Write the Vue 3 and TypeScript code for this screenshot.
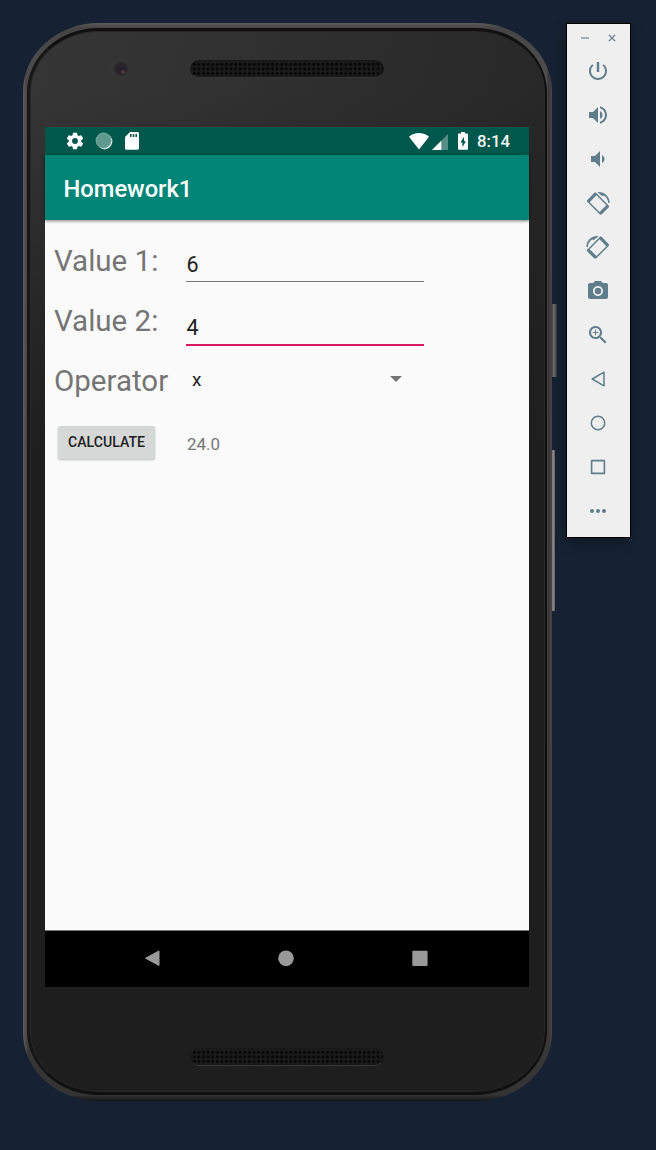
<script setup lang="ts">
import { computed, ref } from 'vue'

interface ToolIcon {
  name: string
  fill?: string
  stroke?: string
  strokeWidth?: number
  shape?: 'rotate-left' | 'rotate-right'
}

const value1 = ref<string>('6')
const value2 = ref<string>('4')
const operator = ref<string>('x')

const result = computed<string>(() => (Number(value1.value) * Number(value2.value)).toFixed(1))

const tools: ToolIcon[] = [
  {
    name: 'Power',
    fill: 'M13.2 3h-2.400v10h2.400V3zm4.63 2.17l-1.42 1.42C17.99 7.86 19 9.81 19 12c0 3.87-3.13 7-7 7s-7-3.13-7-7c0-2.19 1.01-4.14 2.58-5.42L6.17 5.17C4.23 6.82 3 9.26 3 12c0 4.97 4.03 9 9 9s9-4.03 9-9c0-2.74-1.23-5.18-3.17-6.83z',
  },
  {
    name: 'Volume up',
    fill: 'M3 9v6h4l5 5V4L7 9H3zm13.5 3c0-1.77-1.02-3.29-2.5-4.03v8.05c1.48-.73 2.5-2.25 2.5-4.02zM14 3.23v2.06c2.89.86 5 3.54 5 6.71s-2.11 5.85-5 6.71v2.06c4.01-.91 7-4.49 7-8.77s-2.99-7.86-7-8.77z',
  },
  {
    name: 'Volume down',
    fill: 'M18.5 12c0-1.77-1.02-3.29-2.5-4.03v8.05c1.48-.73 2.5-2.25 2.5-4.02zM5 9v6h4l5 5V4L9 9H5z',
  },
  { name: 'Rotate left', shape: 'rotate-left' },
  { name: 'Rotate right', shape: 'rotate-right' },
  {
    name: 'Take screenshot',
    fill: 'M12 8.8a3.2 3.2 0 1 0 0 6.4 3.2 3.2 0 0 0 0-6.4z M9 2L7.17 4H4c-1.1 0-2 .9-2 2v12c0 1.1.9 2 2 2h16c1.1 0 2-.9 2-2V6c0-1.1-.9-2-2-2h-3.17L15 2H9zm3 15c-2.76 0-5-2.24-5-5s2.24-5 5-5 5 2.24 5 5-2.24 5-5 5z',
  },
  {
    name: 'Zoom',
    fill: 'M15.5 14h-.79l-.28-.27C15.41 12.59 16 11.11 16 9.5 16 5.91 13.09 3 9.5 3S3 5.91 3 9.5 5.91 16 9.5 16c1.61 0 3.09-.59 4.23-1.57l.27.28v.79l5 4.99L20.49 19l-4.99-5zm-6 0C7.01 14 5 11.99 5 9.5S7.01 5 9.5 5 14 7.01 14 9.5 11.99 14 9.5 14zM12.2 10H10v2.2H9V10H6.8V9H9V6.8h1V9h2.2z',
  },
  { name: 'Back', stroke: 'M6.2 12L18 5.2v13.6z', strokeWidth: 1.5 },
  { name: 'Home', stroke: 'M12 5.3a6.7 6.7 0 1 0 0 13.4 6.7 6.7 0 0 0 0-13.4z', strokeWidth: 1.5 },
  { name: 'Overview', stroke: 'M5.6 5.6h12.8v12.8H5.6z', strokeWidth: 1.6 },
  {
    name: 'More',
    fill: 'M6 10a2 2 0 1 0 0 4 2 2 0 0 0 0-4zm6 0a2 2 0 1 0 0 4 2 2 0 0 0 0-4zm6 0a2 2 0 1 0 0 4 2 2 0 0 0 0-4z',
  },
]
</script>

<template>
  <main class="desktop">
    <section class="phone">
      <i class="key key-power"></i>
      <i class="key key-volume"></i>
      <div class="face">
        <header class="bezel bezel-top">
          <i class="camera"></i>
          <i class="grille"></i>
        </header>

        <div class="screen">
          <div class="status">
            <svg class="st-gear" viewBox="0 0 24 24">
              <path d="M19.43 12.98c.04-.32.07-.64.07-.98s-.03-.66-.07-.98l2.11-1.65c.19-.15.24-.42.12-.64l-2-3.46c-.12-.22-.39-.3-.61-.22l-2.49 1c-.52-.4-1.08-.73-1.69-.98l-.38-2.65C14.46 2.18 14.25 2 14 2h-4c-.25 0-.46.18-.49.42l-.38 2.65c-.61.25-1.17.59-1.69.98l-2.49-1c-.23-.09-.49 0-.61.22l-2 3.46c-.13.22-.07.49.12.64l2.11 1.65c-.04.32-.07.65-.07.98s.03.66.07.98l-2.11 1.65c-.19.15-.24.42-.12.64l2 3.46c.12.22.39.3.61.22l2.49-1c.52.4 1.08.73 1.69.98l.38 2.65c.03.24.24.42.49.42h4c.25 0 .46-.18.49-.42l.38-2.65c.61-.25 1.17-.59 1.69-.98l2.49 1c.23.09.49 0 .61-.22l2-3.46c.12-.22.07-.49-.12-.64l-2.11-1.65zM12 15.5a3.5 3.5 0 1 1 0-7 3.5 3.5 0 0 1 0 7z" />
            </svg>
            <svg class="st-sync" viewBox="0 0 18 18">
              <circle cx="9.6" cy="9.6" r="7.8" fill="#e3efec" />
              <circle cx="8.5" cy="8.5" r="7.9" fill="#5f9a8e" />
              <circle cx="8.5" cy="8.5" r="7.2" fill="none" stroke="#8ab5ac" stroke-width="1" stroke-dasharray="1 1.26" />
            </svg>
            <svg class="st-card" viewBox="0 0 14 18">
              <path fill-rule="evenodd" d="M5 0h7.5C13.3 0 14 .7 14 1.5v14.7c0 .8-.7 1.5-1.5 1.5h-11C.7 17.7 0 17 0 16.200V5zM5 2v3h1.600V2zm2.700 0v3h1.600V2zm2.700 0v3H12V2z" />
            </svg>
            <span class="spacer"></span>
            <svg class="st-wifi" viewBox="0 0 20 17">
              <path d="M0 3.7C2.8 1.3 6.2 0 10 0s7.2 1.3 10 3.7L10 16.5z" />
            </svg>
            <svg class="st-signal" viewBox="0 0 16 16">
              <path d="M0 16L16 0v16z" opacity=".33" />
              <path d="M0 16L9.300 6.700v9.300z" />
            </svg>
            <svg class="st-battery" viewBox="0 0 10 18">
              <path fill-rule="evenodd" d="M3 0h4v1.6h2c.6 0 1 .4 1 1v14.2c0 .6-.4 1-1 1H1c-.6 0-1-.4-1-1V2.6c0-.6.4-1 1-1h2zM6 4.8L2.4 10.5h2v4.7l3.5-6H6z" />
            </svg>
            <time class="clock">8:14</time>
          </div>

          <div class="appbar"><h1>Homework1</h1></div>

          <form class="content" @submit.prevent>
            <div class="row">
              <label>Value 1:</label>
              <div class="field">{{ value1 }}</div>
            </div>
            <div class="row">
              <label>Value 2:</label>
              <div class="field focused">{{ value2 }}</div>
            </div>
            <div class="row">
              <label>Operator</label>
              <div class="spinner">
                <span>{{ operator }}</span>
                <svg viewBox="0 0 12 6"><path d="M0 0h12L6 6z" /></svg>
              </div>
            </div>
            <div class="row actions">
              <div class="cell"><button type="submit">CALCULATE</button></div>
              <output>{{ result }}</output>
            </div>
          </form>

          <nav class="navbar">
            <svg viewBox="0 0 16 16"><path class="back" d="M15 .9v14.600L1.500 8.200z" /></svg>
            <svg viewBox="0 0 16 16"><circle cx="8" cy="8.300" r="7.800" /></svg>
            <svg viewBox="0 0 16 16"><rect x=".3" y=".8" width="15.300" height="15.200" rx="1" /></svg>
          </nav>
        </div>

        <footer class="bezel bezel-bottom"><i class="grille"></i></footer>
      </div>
    </section>

    <aside class="toolbar">
      <div class="window-buttons">
        <svg class="minimize" viewBox="0 0 8 8"><path d="M0 4h8" /></svg>
        <svg class="close" viewBox="0 0 8 8"><path d="M.9.9l6.200 6.200M7.100.9L.9 7.100" /></svg>
      </div>
      <div v-for="tool in tools" :key="tool.name" class="tool">
        <svg viewBox="0 0 24 24" :aria-label="tool.name">
          <path v-if="tool.fill" :d="tool.fill" fill="#607d8b" />
          <path
            v-if="tool.stroke"
            :d="tool.stroke"
            fill="none"
            stroke="#607d8b"
            :stroke-width="tool.strokeWidth"
            stroke-linejoin="round"
          />
          <g v-if="tool.shape" :transform="tool.shape === 'rotate-right' ? 'translate(24 0) scale(-1 1)' : undefined">
            <path
              fill="#607d8b"
              fill-rule="evenodd"
              transform="rotate(45 12 12.7)"
              d="M3.300 6.400h17.400c.9 0 1.500.6 1.500 1.500v9.600c0 .9-.6 1.500-1.500 1.500H3.300c-.9 0-1.500-.6-1.500-1.500V7.900c0-.9.6-1.500 1.500-1.500zM5 7.900v9.600h14V7.900z"
            />
            <path fill="#607d8b" d="M11.300 1C17.800.2 23.600 5 23.700 12h-1.400c-.3-3.200-2-6-4.700-7.700l-1 .9-4.200-3.300z" />
          </g>
        </svg>
      </div>
    </aside>
  </main>
</template>

<style>
html,
body {
  margin: 0;
  background: #162233;
}
</style>

<style scoped>
.desktop {
  box-sizing: border-box;
  display: flex;
  align-items: flex-start;
  width: 656px;
  height: 1150px;
  padding: 23px 0 0 23px;
  overflow: hidden;
  background: #162233;
  font-family: Roboto, "Liberation Sans", sans-serif;
}

.phone {
  position: relative;
  box-sizing: border-box;
  flex: none;
  width: 529px;
  height: 1078px;
  padding: 5px 5px 6px 4px;
  border-radius: 76px / 68px;
  background: linear-gradient(90deg, #5d5b5b 0, #454344 4px, transparent 5px, transparent 524px, #383536 525px, #484546 529px),
    linear-gradient(180deg, #5b595a 0, #464445 5px, #555 80px, #3a3a3a 1000px, #333 1072px, #171717 1078px);
}

.face {
  box-sizing: border-box;
  height: 1067px;
  padding: 0 14px;
  border: 3px solid #101010;
  border-left-color: #171717;
  border-right-width: 2px;
  border-radius: 72px / 64px;
  box-shadow: inset 0 0 0 1px #292929;
  background: linear-gradient(180deg, transparent 0, transparent 60px, #1e1e1e 420px),
    linear-gradient(105deg, #363637 0%, #303031 30%, #272727 70%, #202020 100%);
}

.bezel {
  display: flex;
}

.bezel-top {
  box-sizing: border-box;
  height: 96px;
  padding-top: 28px;
}

.bezel-bottom {
  padding: 61px 0 0 146px;
}

.camera {
  box-sizing: border-box;
  width: 20px;
  height: 20px;
  margin: 0 60px 0 66px;
  border-radius: 50%;
  background: radial-gradient(circle at 13px 13px, #6d4f55 0, #6d4f5500 2.5px),
    radial-gradient(circle at 11px 10px, #252029 0, #29242c 5px, #2d2c2d 6.5px, #333 8px, #393939 9.5px, #333 10px);
}

.grille {
  box-sizing: border-box;
  width: 194px;
  height: 18px;
  border: 1px solid #181818;
  border-bottom-color: #353535;
  border-radius: 9px;
  background: radial-gradient(circle, #050505 0, #070707 1.1px, #1b1b1b 1.9px) 1px 1px / 4.6px 4.6px #1b1b1b;
}

.bezel-top .grille {
  margin-top: 1px;
}

.key {
  position: absolute;
}

.key-power {
  top: 281px;
  left: 529px;
  width: 5px;
  height: 73px;
  background: linear-gradient(90deg, #444 0, #666 1.5px, #666 3px, #333 4px, #444 5px);
}

.key-volume {
  top: 427px;
  left: 529px;
  width: 3px;
  height: 161px;
  background: linear-gradient(90deg, #777, #8a8a88 2px, #444 3px);
}

.screen {
  display: flex;
  flex-direction: column;
  width: 484px;
  height: 860px;
  margin-left: 1px;
  background: #fafafa;
}

.status {
  box-sizing: border-box;
  display: flex;
  align-items: center;
  height: 28px;
  padding: 0 19px 0 20px;
  background: #00574b;
}

.status svg {
  flex: none;
  fill: #fff;
}

.st-gear {
  width: 20px;
  height: 20px;
}

.st-sync {
  width: 18px;
  height: 18px;
  margin-left: 10px;
}

.st-card {
  width: 14px;
  height: 18px;
  margin-left: 12px;
}

.spacer {
  flex: 1;
}

.st-wifi {
  width: 20px;
  height: 17px;
}

.st-signal {
  width: 16px;
  height: 16px;
  margin: 2px 10px 0 3px;
}

.st-battery {
  width: 10px;
  height: 18px;
  margin-right: 9px;
}

.clock {
  color: #f4f8f7;
  font-size: 16.8px;
  font-weight: 500;
  line-height: 28px;
}

.appbar {
  position: relative;
  display: flex;
  align-items: center;
  height: 65px;
  padding-left: 18.5px;
  background: #008577;
  box-shadow: 0 1px 3px rgba(0, 0, 0, 0.5);
}

h1 {
  margin: 3px 0 0;
  color: #fff;
  font-size: 23.7px;
  font-weight: 500;
  line-height: 30px;
}

.content {
  flex: 1;
  padding: 10px 0 0 9px;
}

.row {
  display: grid;
  grid-template-columns: 133px 238px;
  align-items: start;
  height: 60px;
}

label {
  color: #757575;
  font-size: 29.5px;
  line-height: 62px;
}

.field {
  box-sizing: border-box;
  height: 52px;
  margin-left: -1px;
  width: 238px;
  border-bottom: 1px solid #757575;
  color: #212121;
  font-size: 21.500px;
  line-height: 69px;
  text-indent: 0.600px;
}

.field.focused {
  height: 56px;
  border-bottom: 2px solid #d81b60;
  line-height: 76px;
}

.spinner {
  display: flex;
  align-items: center;
  justify-content: space-between;
  height: 58px;
  padding: 0 23px 0 5px;
  color: #212121;
  font-size: 19px;
}

.spinner svg {
  width: 12px;
  height: 6px;
  fill: #757575;
}

.actions {
  height: 66px;
}

.cell {
  padding: 16px 0 0 4px;
}

button {
  display: block;
  width: 97px;
  height: 33px;
  padding: 0;
  border: 0;
  border-radius: 2px;
  background: #d6d7d7;
  box-shadow: 0 1px 2px rgba(0, 0, 0, 0.25);
  color: #212121;
  font: 500 14.1px/33px Roboto, "Liberation Sans", sans-serif;
}

output {
  color: #757575;
  font-size: 16.9px;
  line-height: 68px;
}

.navbar {
  box-sizing: border-box;
  display: flex;
  align-items: center;
  justify-content: space-between;
  height: 57px;
  padding: 0 101px 0 99px;
  border-top: 1px solid #777;
  background: #000;
}

.navbar svg {
  width: 16px;
  height: 16px;
  margin-top: -2px;
  fill: #999;
}

.navbar .back {
  stroke: #999;
  stroke-width: 1;
  stroke-linejoin: round;
}

.toolbar {
  box-sizing: border-box;
  flex: none;
  width: 65px;
  height: 515px;
  margin-left: 14px;
  border: 1px solid #000;
  background: #efefef;
  box-shadow: 0 5px 14px rgba(0, 0, 0, 0.3);
}

.window-buttons {
  display: flex;
  align-items: center;
  height: 25px;
  padding: 2px 0 0 14px;
  box-sizing: border-box;
}

.window-buttons svg {
  width: 8px;
  height: 8px;
  fill: none;
  stroke: #607d8b;
  stroke-width: 1.3;
}

.window-buttons .minimize {
  margin-right: 19px;
  stroke: #8ea3ad;
  stroke-width: 1.6;
}

.tool {
  display: flex;
  align-items: center;
  justify-content: center;
  height: 44px;
  padding-right: 1.5px;
}

.tool svg {
  width: 24px;
  height: 24px;
  overflow: visible;
}
</style>
